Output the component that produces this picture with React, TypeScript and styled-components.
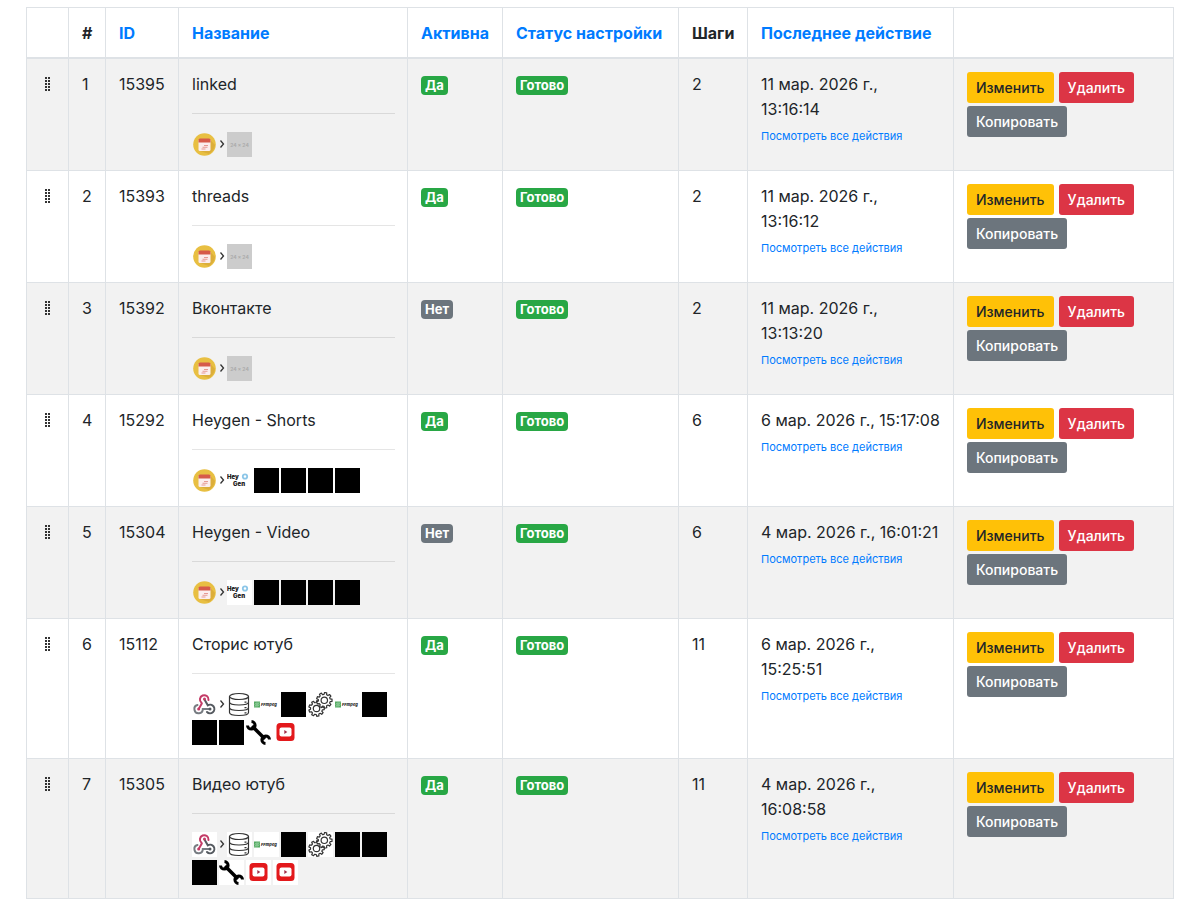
import React from 'react';
import styled, { createGlobalStyle } from 'styled-components';

const GlobalStyle = createGlobalStyle`
  *, *::before, *::after { box-sizing: border-box; }
  body {
    margin: 0;
    background: #fff;
    color: #212529;
    font-family: Inter, Roboto, "Liberation Sans", sans-serif;
    font-size: 16px;
    line-height: 25px;
  }
`;

const Page = styled.main`
  padding: 7px 26px 18px;
`;

const Table = styled.table`
  width: 100%;
  border-collapse: collapse;
  table-layout: fixed;
  border: 1px solid #dee2e6;
`;

const Col = styled.col<{ $width?: number }>`
  width: ${({ $width }) => ($width ? `${$width}px` : 'auto')};
`;

const HeadCell = styled.th`
  padding: 13px 12px 11px 13px;
  border: 1px solid #dee2e6;
  border-bottom-width: 2px;
  text-align: left;
  font-weight: 700;
  white-space: nowrap;
`;

const Row = styled.tr`
  &:nth-child(odd) { background: #f2f2f2; }
`;

const Cell = styled.td`
  padding: 13px 12px 13px 13px;
  border: 1px solid #dee2e6;
  vertical-align: top;
`;

const DateCell = styled(Cell)`
  white-space: pre;
`;

const Link = styled.a`
  color: #007bff;
  text-decoration: none;
`;

const SmallLink = styled(Link)`
  display: block;
  margin-top: 2px;
  font-size: 11px;
`;

const Badge = styled.span<{ $tone: 'success' | 'muted' }>`
  display: inline-block;
  padding: 0 4px;
  border-radius: 4px;
  background: ${({ $tone }) => ($tone === 'success' ? '#28a745' : '#6c757d')};
  color: #fff;
  font-size: 13px;
  font-weight: 700;
  line-height: 19px;
`;

const Divider = styled.hr`
  margin: 16px 0 18px;
  border: 0;
  border-top: 1px solid rgba(0, 0, 0, 0.1);
`;

const Steps = styled.div`
  display: flex;
  flex-wrap: wrap;
  gap: 3px 2px;
`;

const StepIcon = styled.svg`
  display: block;
  width: 25px;
  height: 25px;
`;

const Arrow = styled.svg`
  display: block;
  width: 6px;
  height: 25px;
`;

const Handle = styled.svg`
  display: block;
  width: 16px;
  height: 25px;
`;

const Actions = styled.div`
  display: flex;
  flex-wrap: wrap;
  gap: 3px 5px;
`;

const Button = styled.button<{ $tone: 'warning' | 'danger' | 'secondary' }>`
  height: 31px;
  padding: 0 9px;
  border: 0;
  border-radius: 3px;
  background: ${({ $tone }) => ({ warning: '#ffc107', danger: '#dc3545', secondary: '#6c757d' })[$tone]};
  color: ${({ $tone }) => ($tone === 'warning' ? '#212529' : '#fff')};
  font: inherit;
  font-size: 14px;
  font-weight: 500;
  cursor: pointer;
`;

type Step = 'schedule' | 'placeholder' | 'heygen' | 'hidden' | 'webhook' | 'database' | 'ffmpeg' | 'gears' | 'wrench' | 'youtube';

const gearPath = (cx: number, cy: number, outer: number, inner: number, teeth: number) => {
  const points: string[] = [];
  const step = (Math.PI * 2) / teeth;
  for (let i = 0; i < teeth; i += 1) {
    [[-0.32, inner], [-0.2, outer], [0.2, outer], [0.32, inner]].forEach(([offset, radius]) => {
      const angle = (i + offset) * step;
      points.push(`${(cx + Math.cos(angle) * radius).toFixed(2)} ${(cy + Math.sin(angle) * radius).toFixed(2)}`);
    });
  }
  return `M${points.join('L')}Z`;
};

const drawings: Record<Step, React.ReactNode> = {
  schedule: (
    <>
      <circle cx="12.5" cy="12.5" r="11.3" fill="#e8bf42" />
      <path d="M8 19 18.500 8l4.500 5q-1 6-6 9z" fill="#dcae3a" />
      <path d="M6.500 8h12v9.500q0 1.500-1.500 1.500H8q-1.500 0-1.500-1.500z" fill="#fbeeee" />
      <path d="M6.500 10.500V8q0-1.500 1.500-1.500h9q1.500 0 1.500 1.500v2.500z" fill="#d65a4a" />
      <path d="M12 13.500h4M10.500 15.300h5M9.500 17h4" stroke="#e69a94" strokeWidth="1.100" />
    </>
  ),
  placeholder: (
    <>
      <rect width="25" height="25" fill="#ccc" />
      <text x="12.500" y="14.500" textAnchor="middle" fontSize="5" fontWeight="700" fill="#aaa">24 x 24</text>
    </>
  ),
  heygen: (
    <>
      <rect width="25" height="25" fill="#fff" />
      <text x="0" y="11" fontSize="6" fontWeight="900" fill="#222">Hey</text>
      <text x="6" y="18" fontSize="6" fontWeight="900" fill="#222">Gen</text>
      <circle cx="18" cy="8.500" r="2.200" fill="none" stroke="#8cc6e8" strokeWidth="1.800" />
    </>
  ),
  hidden: <rect width="25" height="25" fill="#000" />,
  webhook: (
    <>
      <rect width="25" height="25" fill="#fff" />
      <g fill="none" strokeWidth="2" strokeLinecap="round">
        <path d="M9.500 10.800A4.300 4.300 0 1 1 16.500 8" stroke="#c43b67" />
        <path d="M12.500 7.500 15.800 13.300A4.300 4.300 0 1 1 15 20" stroke="#555a60" />
        <path d="M18 17H10.800A4.200 4.200 0 1 1 5.500 13" stroke="#777c82" />
        <path d="M9.800 11.500 6.700 17" stroke="#c43b67" />
      </g>
      <circle cx="12.500" cy="7" r="1.500" fill="#c43b67" />
      <circle cx="6.700" cy="17" r="1.500" fill="#c43b67" />
      <circle cx="18" cy="17" r="1.500" fill="#555a60" />
    </>
  ),
  database: (
    <>
      <rect width="25" height="25" fill="#fff" />
      <g fill="none" stroke="#333" strokeWidth="1.200">
        <ellipse cx="12" cy="4.500" rx="9.500" ry="3" />
        <path d="M2.500 4.500v16q0 3 9.500 3t9.500-3v-16M2.500 10q0 3 9.500 3t9.500-3M2.500 15.500q0 3 9.500 3t9.500-3" />
        <path d="M17.500 10.200h2M17.500 15.700h2M17.500 20.900h2" />
      </g>
    </>
  ),
  ffmpeg: (
    <>
      <rect width="25" height="25" fill="#fff" />
      <rect x="0" y="9.500" width="6" height="6" fill="#55aa63" />
      <path d="m1 12.500 2-2M1 14.500l4-4M3 14.500l2-2" stroke="#c9ecd0" strokeWidth=".8" />
      <text x="7" y="14" fontSize="4" fontWeight="800" fontStyle="italic" fill="#222">FFmpeg</text>
    </>
  ),
  gears: (
    <>
      <rect width="25" height="25" fill="#fff" />
      <g fill="#fff" stroke="#333" strokeWidth="1.200" strokeLinejoin="round">
        <path d={gearPath(8.5, 16.5, 7.8, 6, 9)} />
        <circle cx="8.500" cy="16.500" r="3.200" />
        <path d={gearPath(16.3, 8.3, 7.8, 6, 9)} />
        <circle cx="16.300" cy="8.300" r="3.200" />
      </g>
    </>
  ),
  wrench: (
    <>
      <rect width="25" height="25" fill="#fff" />
      <path d="m6 6 13 13" stroke="#000" strokeWidth="3.500" />
      <path d="M5.500 1.500A3.800 3.800 0 1 1 1.500 5.500M19.500 23.500A3.800 3.800 0 1 1 23.500 19.500" fill="none" stroke="#000" strokeWidth="3" />
    </>
  ),
  youtube: (
    <>
      <rect width="25" height="25" fill="#fff" />
      <rect x="3.500" y="3" width="18" height="18" rx="3.500" fill="#e3191c" />
      <rect x="6.500" y="7.500" width="12" height="9" rx="2" fill="#fff" />
      <path d="M11.300 10v4l3-2z" fill="#a3304a" />
    </>
  ),
};

interface Scenario {
  id: number;
  name: string;
  active: boolean;
  count: number;
  date: string;
  steps: Step[];
}

const scenarios: Scenario[] = [
  { id: 15395, name: 'linked', active: true, count: 2, date: '11 мар. 2026 г.,\n13:16:14', steps: ['schedule', 'placeholder'] },
  { id: 15393, name: 'threads', active: true, count: 2, date: '11 мар. 2026 г.,\n13:16:12', steps: ['schedule', 'placeholder'] },
  { id: 15392, name: 'Вконтакте', active: false, count: 2, date: '11 мар. 2026 г.,\n13:13:20', steps: ['schedule', 'placeholder'] },
  { id: 15292, name: 'Heygen - Shorts', active: true, count: 6, date: '6 мар. 2026 г., 15:17:08', steps: ['schedule', 'heygen', 'hidden', 'hidden', 'hidden', 'hidden'] },
  { id: 15304, name: 'Heygen - Video', active: false, count: 6, date: '4 мар. 2026 г., 16:01:21', steps: ['schedule', 'heygen', 'hidden', 'hidden', 'hidden', 'hidden'] },
  { id: 15112, name: 'Сторис ютуб', active: true, count: 11, date: '6 мар. 2026 г.,\n15:25:51', steps: ['webhook', 'database', 'ffmpeg', 'hidden', 'gears', 'ffmpeg', 'hidden', 'hidden', 'hidden', 'wrench', 'youtube'] },
  { id: 15305, name: 'Видео ютуб', active: true, count: 11, date: '4 мар. 2026 г.,\n16:08:58', steps: ['webhook', 'database', 'ffmpeg', 'hidden', 'gears', 'hidden', 'hidden', 'hidden', 'wrench', 'youtube', 'youtube'] },
];

const columns: { label: string; width?: number; sortable?: boolean }[] = [
  { label: '', width: 42 },
  { label: '#', width: 37 },
  { label: 'ID', width: 73, sortable: true },
  { label: 'Название', width: 229, sortable: true },
  { label: 'Активна', width: 95, sortable: true },
  { label: 'Статус настройки', width: 176, sortable: true },
  { label: 'Шаги', width: 69 },
  { label: 'Последнее действие', width: 206, sortable: true },
  { label: '' },
];

const DragHandle = () => (
  <Handle viewBox="0 0 16 25" aria-hidden="true">
    {[6, 9, 12, 15, 18].map((y) => (
      <path key={y} d={`M5 ${y}h2M8 ${y}h2`} stroke="#333" strokeWidth="2" />
    ))}
  </Handle>
);

const StepList = ({ steps }: { steps: Step[] }) => (
  <Steps>
    {steps.map((step, index) => (
      <React.Fragment key={index}>
        {index === 1 && (
          <Arrow viewBox="0 0 6 25" aria-hidden="true">
            <path d="m1.500 8.500 3 3.500-3 3.500" fill="none" stroke="#333" strokeWidth="1.300" />
          </Arrow>
        )}
        <StepIcon viewBox="0 0 25 25" aria-hidden="true">{drawings[step]}</StepIcon>
      </React.Fragment>
    ))}
  </Steps>
);

export default function App() {
  return (
    <Page>
      <GlobalStyle />
      <Table>
        <colgroup>
          {columns.map((column, index) => <Col key={index} $width={column.width} />)}
        </colgroup>
        <thead>
          <tr>
            {columns.map((column, index) => (
              <HeadCell key={index} scope="col">
                {column.sortable ? <Link href="#">{column.label}</Link> : column.label}
              </HeadCell>
            ))}
          </tr>
        </thead>
        <tbody>
          {scenarios.map((scenario, index) => (
            <Row key={scenario.id}>
              <Cell><DragHandle /></Cell>
              <Cell>{index + 1}</Cell>
              <Cell>{scenario.id}</Cell>
              <Cell>
                {scenario.name}
                <Divider />
                <StepList steps={scenario.steps} />
              </Cell>
              <Cell><Badge $tone={scenario.active ? 'success' : 'muted'}>{scenario.active ? 'Да' : 'Нет'}</Badge></Cell>
              <Cell><Badge $tone="success">Готово</Badge></Cell>
              <Cell>{scenario.count}</Cell>
              <DateCell>
                {scenario.date}
                <SmallLink href="#">Посмотреть все действия</SmallLink>
              </DateCell>
              <Cell>
                <Actions>
                  <Button type="button" $tone="warning">Изменить</Button>
                  <Button type="button" $tone="danger">Удалить</Button>
                  <Button type="button" $tone="secondary">Копировать</Button>
                </Actions>
              </Cell>
            </Row>
          ))}
        </tbody>
      </Table>
    </Page>
  );
}
